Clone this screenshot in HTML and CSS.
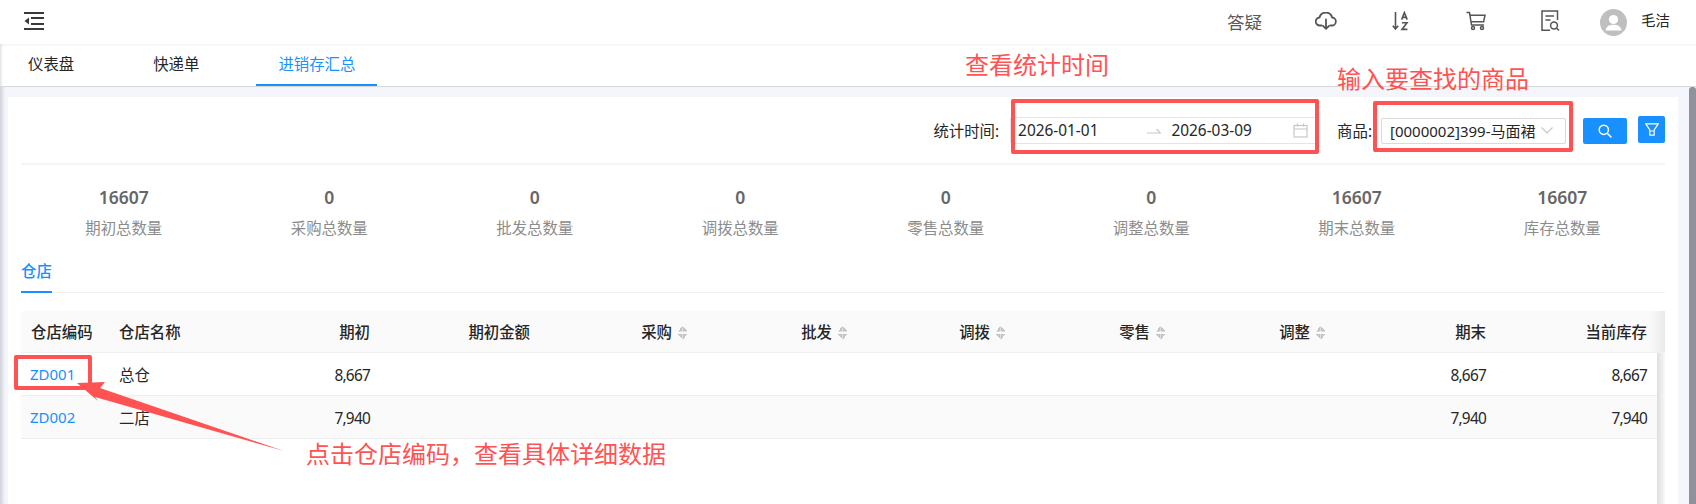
FILE: index.html
```html
<!DOCTYPE html>
<html lang="zh-CN">
<head>
  <meta charset="UTF-8">
  <title>进销存汇总</title>
  <link rel="stylesheet" href="styles.css">
</head>
<body>
  <div class="topbar">
    <svg class="menu-toggle" width="20" height="18" viewBox="0 0 20 18" fill="#3a3a3a">
      <rect x="0" y="0" width="20" height="2"></rect>
      <rect x="7" y="5" width="13" height="2"></rect>
      <rect x="7" y="11" width="13" height="2"></rect>
      <rect x="0" y="16" width="20" height="2"></rect>
      <path d="M0.5 9 L5 5.5 V12.5 Z"></path>
    </svg>
    <div class="nav">
      <div class="nav-item nav-text">答疑</div>
      <div class="nav-item">
        <svg width="22" height="18" viewBox="0 0 22 18" fill="none" stroke="#555" stroke-width="1.8" stroke-linecap="round" stroke-linejoin="round">
          <path d="M6.5 13.5 H5 a4 4 0 0 1 -.5 -8 a6.5 6.5 0 0 1 12.6 0 a4 4 0 0 1 -.5 8 H15.5"></path>
          <path d="M11 7.5 V16.5 M8 13.8 L11 16.8 L14 13.8"></path>
        </svg>
      </div>
      <div class="nav-item">
        <svg width="17" height="20" viewBox="0 0 17 20" fill="none" stroke="#555" stroke-width="1.6">
          <path d="M3.5 1 V18 M0.8 14.8 L3.5 18 L6.2 14.8"></path>
          <path d="M9.6 8.6 L12.4 1.6 L15.2 8.6 M10.6 6.4 H14.2"></path>
          <path d="M10 11.8 H15 L10 18.4 H15.4"></path>
        </svg>
      </div>
      <div class="nav-item">
        <svg width="20" height="20" viewBox="0 0 20 20" fill="none" stroke="#555" stroke-width="1.5">
          <path d="M0.5 1.5 H3.5 L5.5 14 H18"></path>
          <path d="M3.8 4.2 H19 L17.6 10.8 H5"></path>
          <circle cx="7" cy="17" r="1.5"></circle>
          <circle cx="16" cy="17" r="1.5"></circle>
        </svg>
      </div>
      <div class="nav-item">
        <svg width="19" height="22" viewBox="0 0 19 22" fill="none" stroke="#555" stroke-width="1.5">
          <path d="M9 20.2 H1 V1 H16.5 V10"></path>
          <path d="M4.5 6 H13 M4.5 10 H9.5"></path>
          <circle cx="13" cy="15.5" r="3.4"></circle>
          <path d="M15.5 18 L18 20.6"></path>
        </svg>
      </div>
      <svg class="avatar" width="27" height="27" viewBox="0 0 27 27">
        <circle cx="13.5" cy="13.5" r="13.5" fill="#bfbfbf"></circle>
        <circle cx="13.5" cy="10.5" r="4.6" fill="#fff"></circle>
        <path d="M5.5 21.5 C6.5 16.5 10 15.8 13.5 15.8 C17 15.8 20.5 16.5 21.5 21.5 Z" fill="#fff"></path>
      </svg>
      <div class="user-name">毛洁</div>
    </div>
  </div>

  <div class="page-tabs">
    <div class="page-tab">仪表盘</div>
    <div class="page-tab">快递单</div>
    <div class="page-tab active">进销存汇总</div>
  </div>

  <div class="main">
    <div class="card">
      <div class="toolbar">
        <span class="field-label">统计时间:</span>
        <div class="range-input">
          <span class="range-value">2026-01-01</span>
          <svg class="range-arrow" width="14" height="6" viewBox="0 0 14 6" fill="none" stroke="#c8c8c8" stroke-width="1.2"><path d="M0 5 H13.5 L9.5 1"></path></svg>
          <span class="range-value">2026-03-09</span>
          <svg class="calendar" width="15" height="15" viewBox="0 0 15 15" fill="none" stroke="#c4c4c4" stroke-width="1.1">
            <rect x="1" y="2.5" width="13" height="11.5"></rect>
            <path d="M1 6 H14 M4.5 0.5 V3.5 M10.5 0.5 V3.5"></path>
          </svg>
        </div>
        <span class="field-label goods-label">商品:</span>
        <div class="select-input">
          <span>[0000002]399-马面裙</span>
          <svg width="12" height="7" viewBox="0 0 12 7" fill="none" stroke="#c4c4c4" stroke-width="1.1"><path d="M0.5 0.5 L6 6 L11.5 0.5"></path></svg>
        </div>
        <button class="btn btn-search">
          <svg width="14" height="14" viewBox="0 0 14 14" fill="none" stroke="#fff" stroke-width="1.5"><circle cx="5.8" cy="5.8" r="4.6"></circle><path d="M9.2 9.2 L13.4 13.4"></path></svg>
        </button>
        <button class="btn btn-filter">
          <svg width="14" height="13" viewBox="0 0 14 13" fill="none" stroke="#fff" stroke-width="1.2"><path d="M0.8 0.8 H13.2 L9.2 7 V12.2 H4.8 V7 Z M4.8 8 H9.2"></path></svg>
        </button>
      </div>

      <div class="stats">
        <div class="stat"><div class="stat-value">16607</div><div class="stat-label">期初总数量</div></div>
        <div class="stat"><div class="stat-value">0</div><div class="stat-label">采购总数量</div></div>
        <div class="stat"><div class="stat-value">0</div><div class="stat-label">批发总数量</div></div>
        <div class="stat"><div class="stat-value">0</div><div class="stat-label">调拨总数量</div></div>
        <div class="stat"><div class="stat-value">0</div><div class="stat-label">零售总数量</div></div>
        <div class="stat"><div class="stat-value">0</div><div class="stat-label">调整总数量</div></div>
        <div class="stat"><div class="stat-value">16607</div><div class="stat-label">期末总数量</div></div>
        <div class="stat"><div class="stat-value">16607</div><div class="stat-label">库存总数量</div></div>
      </div>

      <div class="inner-tabs"><div class="inner-tab">仓店</div></div>

      <div class="table-head row">
        <div class="cell">仓店编码</div>
        <div class="cell">仓店名称</div>
        <div class="cell num">期初</div>
        <div class="cell num">期初金额</div>
        <div class="cell sort">采购<i class="sorter"></i></div>
        <div class="cell sort">批发<i class="sorter"></i></div>
        <div class="cell sort">调拨<i class="sorter"></i></div>
        <div class="cell sort">零售<i class="sorter"></i></div>
        <div class="cell sort">调整<i class="sorter"></i></div>
        <div class="cell num">期末</div>
        <div class="cell num">当前库存</div>
      </div>
      <div class="table-body">
        <div class="row body-row">
          <div class="cell"><a class="code-link">ZD001</a></div>
          <div class="cell name">总仓</div>
          <div class="cell num">8,667</div>
          <div class="cell"></div><div class="cell"></div><div class="cell"></div><div class="cell"></div><div class="cell"></div><div class="cell"></div>
          <div class="cell num">8,667</div>
          <div class="cell num">8,667</div>
        </div>
        <div class="row body-row striped">
          <div class="cell"><a class="code-link">ZD002</a></div>
          <div class="cell name">二店</div>
          <div class="cell num">7,940</div>
          <div class="cell"></div><div class="cell"></div><div class="cell"></div><div class="cell"></div><div class="cell"></div><div class="cell"></div>
          <div class="cell num">7,940</div>
          <div class="cell num">7,940</div>
        </div>
      </div>
    </div>
    <div class="scrollbar"></div>
  </div>

  <!-- annotations drawn over the screenshot -->
  <div class="note note-time">查看统计时间</div>
  <div class="note note-goods">输入要查找的商品</div>
  <div class="note note-code">点击仓店编码，查看具体详细数据</div>
  <div class="mark mark-time"></div>
  <div class="mark mark-goods"></div>
  <div class="mark mark-code"></div>
  <svg class="note-arrow" width="300" height="110" viewBox="0 0 300 110">
    <path d="M77 23 L105 22 L100 28 L284 91 L95 37 L98 41 Z" fill="#ff5353"></path>
  </svg>
</body>
</html>
```

FILE: styles.css
```css
* {
  box-sizing: border-box;
}
html, body {
  height: 100%;
}
body {
  margin: 0;
  display: flex;
  flex-direction: column;
  overflow: hidden;
  position: relative;
  font-family: "Noto Sans", "Noto Sans CJK SC", sans-serif;
  font-size: 15.4px;
  color: #262626;
  background-color: #fff;
}
.topbar {
  height: 44px;
  flex-shrink: 0;
  display: flex;
  align-items: center;
  justify-content: space-between;
  padding: 0 26px 2px 24px;
  box-shadow: 0 1px 3px rgba(0, 0, 0, 0.06);
}
.nav {
  display: flex;
  align-items: center;
}
.nav-item {
  width: 75px;
  display: flex;
  justify-content: center;
}
.nav-text {
  margin-right: 6px;
  font-size: 17.5px;
  color: #595959;
}
.avatar {
  margin-left: 12px;
  margin-top: 2px;
}
.user-name {
  margin-left: 14px;
  margin-bottom: 4px;
  font-size: 14.5px;
}
.page-tabs {
  height: 43px;
  flex-shrink: 0;
  display: flex;
  gap: 35px;
  padding-left: 6px;
  border-bottom: 1px solid #d9d9d9;
  box-shadow: inset 4px 0 3px -3px rgba(0, 0, 30, 0.15);
}
.page-tab {
  padding: 0 22px;
  line-height: 42px;
}
.page-tab.active {
  color: #1890ff;
  border-bottom: 2px solid #1890ff;
}
.main {
  flex: 1;
  min-height: 0;
  display: flex;
  padding: 10px 0 0 8px;
  background-color: #f5f6fb;
  box-shadow: inset 5px 0 4px -3px rgba(0, 0, 30, 0.18);
}
.card {
  width: 1670px;
  padding: 0 13px;
  display: flex;
  flex-direction: column;
  background-color: #fff;
}
.scrollbar {
  width: 7px;
  margin-left: 11px;
  margin-top: -10px;
  border-radius: 3px 3px 0 0;
  background-color: #8f929b;
}
.toolbar {
  height: 68px;
  flex-shrink: 0;
  display: flex;
  align-items: center;
  padding-top: 1px;
  border-bottom: 2px solid #f5f5f5;
}
.field-label {
  margin-left: auto;
}
.range-input {
  width: 307px;
  height: 27px;
  margin-left: 11px;
  padding: 0 7px;
  display: flex;
  align-items: center;
  border: 1px solid #e4e4e4;
  border-radius: 2px;
}
.range-arrow {
  margin: 0 10px 0 49px;
}
.calendar {
  margin-left: auto;
  margin-right: 1px;
}
.goods-label {
  margin-left: 20px;
}
.select-input {
  width: 185px;
  height: 26px;
  margin-left: 9px;
  padding: 0 12px 0 8px;
  display: flex;
  align-items: center;
  justify-content: space-between;
  font-size: 15px;
  white-space: nowrap;
  border: 1px solid #d9d9d9;
  border-radius: 2px;
}
.btn {
  height: 26px;
  padding: 0;
  display: flex;
  align-items: center;
  justify-content: center;
  border: none;
  border-radius: 2px;
  background-color: #1890ff;
}
.btn-search {
  width: 44px;
  margin-left: 17px;
}
.btn-filter {
  width: 27px;
  height: 27px;
  margin-left: 11px;
  margin-bottom: 2px;
}
.stats {
  height: 84px;
  flex-shrink: 0;
  display: grid;
  grid-template-columns: repeat(8, 1fr);
  padding-top: 20px;
  text-align: center;
}
.stat-value {
  font-size: 17.5px;
  font-weight: 600;
  line-height: 24px;
  color: #666;
}
.stat-label {
  margin-top: 8px;
  line-height: 24px;
  color: #8c8c8c;
}
.inner-tabs {
  height: 44px;
  flex-shrink: 0;
  border-bottom: 1px solid #f0f0f0;
}
.inner-tab {
  display: inline-block;
  height: 44px;
  line-height: 46px;
  font-weight: 500;
  color: #1890ff;
  border-bottom: 2px solid #1890ff;
}
.row {
  display: grid;
  grid-template-columns: 88px 111px 160px 160px 160px 160px 158px 160px 160px 158px 161px;
}
.cell {
  padding: 0 10px;
  white-space: nowrap;
}
.num {
  text-align: right;
}
.body-row .num {
  line-height: 45px;
  letter-spacing: -0.75px;
}
.table-head {
  height: 42px;
  flex-shrink: 0;
  margin-top: 18px;
  line-height: 43px;
  font-weight: 500;
  border-bottom: 1px solid #f0f0f0;
  background: linear-gradient(to right, rgba(0, 0, 0, 0), #e9e9e9) right top / 15px 100% no-repeat, #fafafa;
}
.sort {
  display: flex;
  align-items: center;
  justify-content: flex-end;
  padding-right: 13px;
}
.sorter {
  display: block;
  width: 9px;
  height: 14px;
  margin-left: 6px;
  background:
    linear-gradient(to bottom right, transparent 50%, #c4c4c4 50%) left top / 4.5px 5.5px no-repeat,
    linear-gradient(to bottom left, transparent 50%, #c4c4c4 50%) right top / 4.5px 5.5px no-repeat,
    linear-gradient(to top right, transparent 50%, #c4c4c4 50%) left bottom / 4.5px 5.5px no-repeat,
    linear-gradient(to top left, transparent 50%, #c4c4c4 50%) right bottom / 4.5px 5.5px no-repeat;
}
.table-body {
  flex: 1;
  padding-right: 8px;
  background: linear-gradient(to right, #dedede, #f8f8f8) right top / 8px 100% no-repeat;
}
.body-row {
  height: 43px;
  line-height: 42px;
  border-bottom: 1px solid #eee;
}
.body-row .name {
  line-height: 46px;
}
.striped {
  background-color: #fafafa;
}
.code-link {
  margin-left: -1px;
  font-size: 15px;
  color: #1890ff;
}
.note {
  position: absolute;
  font-size: 24px;
  line-height: 30px;
  white-space: nowrap;
  color: #ff5353;
}
.note-time {
  left: 965px;
  top: 50px;
}
.note-goods {
  left: 1337px;
  top: 64px;
}
.note-code {
  left: 306px;
  top: 439px;
}
.mark {
  position: absolute;
  border: 4px solid #ff5353;
  border-radius: 2px;
}
.mark-time {
  left: 1011px;
  top: 99px;
  width: 308px;
  height: 55px;
}
.mark-goods {
  left: 1373px;
  top: 101px;
  width: 200px;
  height: 51px;
}
.mark-code {
  left: 14px;
  top: 355px;
  width: 78px;
  height: 35px;
}
.note-arrow {
  position: absolute;
  left: 0;
  top: 360px;
}
```
